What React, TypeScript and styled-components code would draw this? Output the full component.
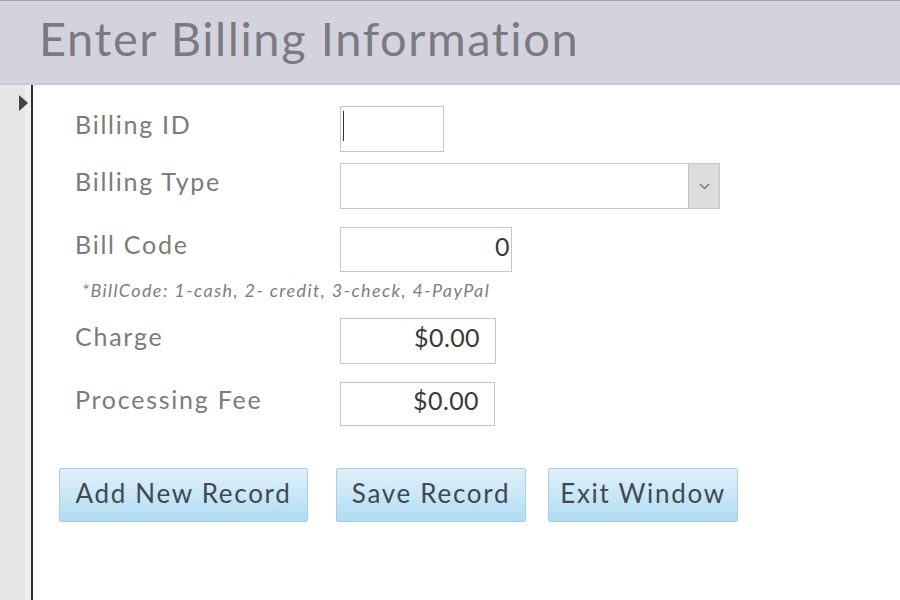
import React from 'react';
import styled, { createGlobalStyle } from 'styled-components';

const GlobalStyle = createGlobalStyle`
  html, body {
    margin: 0;
    padding: 0;
    background: #ffffff;
  }
  * {
    box-sizing: border-box;
  }
`;

const Page = styled.div`
  width: 900px;
  height: 600px;
  overflow: hidden;
  display: flex;
  flex-direction: column;
  font-family: Lato, 'Liberation Sans', sans-serif;
  border-top: 1px solid #a2a2a6;
`;

const Header = styled.header`
  height: 84px;
  flex-shrink: 0;
  background-color: #d4d3dd;
  border-bottom: 2px solid #cbcad2;
  padding-left: 39px;
  display: flex;
  align-items: center;
`;

const Title = styled.h1`
  margin: 0;
  font-weight: 400;
  font-size: 47px;
  letter-spacing: 1.6px;
  color: #7a7a82;
  line-height: 1;
  padding-bottom: 8px;
`;

const Body = styled.div`
  flex: 1;
  display: flex;
`;

const Selector = styled.div`
  width: 33px;
  flex-shrink: 0;
  background-color: #e6e6e6;
  border-right: 2px solid #2e2e2e;
  box-shadow: inset -6px 0 0 #eeeeee, inset -4px 0 0 #e4e4e4;
  position: relative;
`;

const Arrow = styled.div`
  position: absolute;
  top: 10px;
  left: 19px;
  width: 0;
  height: 0;
  border-top: 8px solid transparent;
  border-bottom: 8px solid transparent;
  border-left: 9px solid #444444;
`;

const Content = styled.main`
  flex: 1;
  padding: 21px 0 0 42px;
  display: flex;
  flex-direction: column;
`;

const Row = styled.div<{ $gap: number }>`
  display: grid;
  grid-template-columns: 265px auto;
  align-items: center;
  margin-top: ${(p) => p.$gap}px;
`;

const Label = styled.div`
  font-size: 25px;
  color: #7b7b7b;
  letter-spacing: 1.75px;
  padding-bottom: 11px;
`;

const Field = styled.div<{ $w: number; $h: number; $pad: number }>`
  width: ${(p) => p.$w}px;
  height: ${(p) => p.$h}px;
  border: 1px solid #c6c6c6;
  background: #ffffff;
  display: flex;
  align-items: center;
  justify-content: flex-end;
  padding-right: ${(p) => p.$pad}px;
  padding-bottom: 8px;
  font-size: 25px;
  letter-spacing: 0.4px;
  color: #3a3a3a;
  position: relative;
`;

const Caret = styled.span`
  position: absolute;
  left: 2px;
  top: 4px;
  width: 1px;
  height: 30px;
  background: #333333;
`;

const Combo = styled.div`
  width: 380px;
  height: 46px;
  border: 1px solid #c6c6c6;
  display: flex;
  justify-content: flex-end;
`;

const ComboButton = styled.div`
  width: 31px;
  background-color: #dcdcdc;
  border-left: 1px solid #c4c4c4;
  display: flex;
  align-items: center;
  justify-content: center;
`;

const Note = styled.div`
  margin: 7px 0 0 7px;
  font-size: 18px;
  font-style: italic;
  color: #7e7e7e;
  letter-spacing: 1.4px;
`;

const Buttons = styled.div`
  display: flex;
  margin: 42px 0 0 -16px;
`;

const Button = styled.button<{ $w: number; $ml: number }>`
  width: ${(p) => p.$w}px;
  height: 54px;
  margin-left: ${(p) => p.$ml}px;
  border: 1px solid #a9cfe2;
  border-radius: 2px;
  background: linear-gradient(to bottom, #dff0fa 0%, #c9e7f7 50%, #b0dcf3 100%);
  font-family: Lato, 'Liberation Sans', sans-serif;
  font-size: 26px;
  letter-spacing: 1.7px;
  color: #3e4a55;
  padding: 0 0 4px;
  cursor: pointer;
`;

export default function App() {
  return (
    <>
      <GlobalStyle />
      <Page>
        <Header>
          <Title>Enter Billing Information</Title>
        </Header>
        <Body>
          <Selector>
            <Arrow />
          </Selector>
          <Content>
            <Row $gap={0}>
              <Label>Billing ID</Label>
              <Field $w={104} $h={46} $pad={8}>
                <Caret />
              </Field>
            </Row>
            <Row $gap={11}>
              <Label>Billing Type</Label>
              <Combo>
                <ComboButton>
                  <svg width="11" height="7" viewBox="0 0 11 7">
                    <path d="M1 1 L5.5 5.5 L10 1" fill="none" stroke="#6a6a6a" strokeWidth="1.2" />
                  </svg>
                </ComboButton>
              </Combo>
            </Row>
            <Row $gap={18}>
              <Label>Bill Code</Label>
              <Field $w={172} $h={45} $pad={1}>
                0
              </Field>
            </Row>
            <Note>*BillCode: 1-cash, 2- credit, 3-check, 4-PayPal</Note>
            <Row $gap={17}>
              <Label>Charge</Label>
              <Field $w={156} $h={46} $pad={15}>
                $0.00
              </Field>
            </Row>
            <Row $gap={18}>
              <Label>Processing Fee</Label>
              <Field $w={155} $h={44} $pad={15}>
                $0.00
              </Field>
            </Row>
            <Buttons>
              <Button $w={249} $ml={0}>Add New Record</Button>
              <Button $w={190} $ml={28}>Save Record</Button>
              <Button $w={190} $ml={22}>Exit Window</Button>
            </Buttons>
          </Content>
        </Body>
      </Page>
    </>
  );
}
